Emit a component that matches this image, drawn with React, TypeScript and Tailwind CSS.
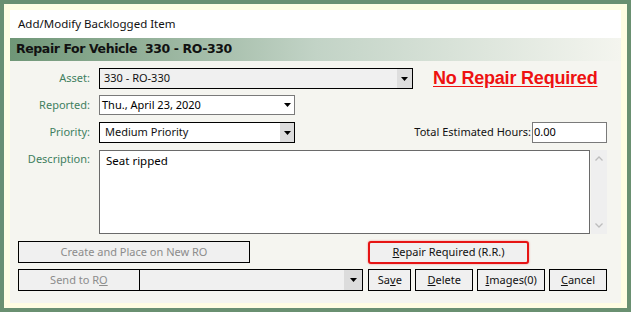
import React from 'react';

const Arrow = ({ className = '' }: { className?: string }) => (
  <svg width="7" height="4" viewBox="0 0 7 4" className={className}>
    <path d="M0 0h7L3.5 4z" fill="#000" />
  </svg>
);

const Label: React.FC<{ children: React.ReactNode; className?: string }> = ({ children, className = '' }) => (
  <div className={`w-[81px] shrink-0 text-right text-[11px] text-[#3f7f5f] pr-[1px] ${className}`}>{children}</div>
);

const Btn: React.FC<{ children: React.ReactNode; className?: string }> = ({ children, className = '' }) => (
  <div className={`h-[22px] flex items-center justify-center bg-[#f0f0f0] border border-black text-[11px] ${className}`}>{children}</div>
);

export default function App() {
  return (
    <div className="w-[631px] h-[312px] bg-[#6a9071] p-[4px] font-['Noto_Sans',sans-serif]">
      <div className="w-[623px] h-[304px] bg-[#fffde2] pt-[6px] pl-[6px] pr-[6px] pb-[5px]">
        <div className="w-[611px] h-[293px] flex flex-col">
          {/* Title */}
          <div className="h-[28px] bg-white flex items-center pl-[8px] text-[11.5px] text-[#111]">
            Add/Modify Backlogged Item
          </div>
          {/* Header */}
          <div className="h-[23px] bg-gradient-to-r from-[#6f9677] via-[#c2d3c6] to-[#f4f5ef] flex items-center pl-[6px] text-[12.5px] font-bold text-[#111] font-['DejaVu_Sans',sans-serif] tracking-[-0.4px] whitespace-pre">
            Repair For Vehicle  330 - RO-330
          </div>
          {/* Body */}
          <div className="flex-1 bg-[#f5f5f0] flex flex-col pr-[14px]">
            {/* Asset */}
            <div className="flex items-center mt-[7px] h-[21px]">
              <Label>Asset:</Label>
              <div className="ml-[8px] w-[314px] h-[21px] border border-black bg-[#f0f0f0] flex items-center">
                <span className="flex-1 pl-[4px] text-[11px] text-[#111]">330 - RO-330</span>
                <div className="w-[15px] h-full bg-[#dedede] flex items-center justify-center">
                  <Arrow />
                </div>
              </div>
              <div className="ml-[20px] whitespace-nowrap text-[18px] font-bold text-[#ee1111] underline underline-offset-2 font-['Liberation_Sans',sans-serif] tracking-[-0.2px]">
                No Repair Required
              </div>
            </div>
            {/* Reported */}
            <div className="flex items-center mt-[6px] h-[20px]">
              <Label>Reported:</Label>
              <div className="ml-[8px] w-[196px] h-[20px] border border-[#7a7a7a] bg-white flex items-center">
                <span className="flex-1 pl-[2px] text-[11px] text-black">Thu., April 23, 2020</span>
                <Arrow className="mr-[3px]" />
              </div>
            </div>
            {/* Priority */}
            <div className="flex items-center mt-[7px] h-[21px]">
              <Label>Priority:</Label>
              <div className="ml-[8px] w-[196px] h-[21px] border border-black bg-white flex items-center">
                <span className="flex-1 pl-[5px] text-[11px] text-[#111]">Medium Priority</span>
                <div className="w-[14px] h-full bg-[#dcdcdc] flex items-center justify-center">
                  <Arrow />
                </div>
              </div>
              <div className="flex-1" />
              <div className="text-[11px] text-[#111] mr-[1px]">Total Estimated Hours:</div>
              <div className="w-[75px] h-[21px] border border-[#7a7a7a] bg-white flex items-center pl-[1px] text-[11px] text-black">
                0.00
              </div>
            </div>
            {/* Description */}
            <div className="flex mt-[7px] h-[84px]">
              <Label className="pt-[1px]">Description:</Label>
              <div className="ml-[8px] w-[491px] h-full border border-[#6a6a6a] bg-white pl-[6px] pt-[1px] text-[11.5px] text-black">
                Seat ripped
              </div>
              <div className="ml-[1px] w-[16px] h-full bg-[#efefef] flex flex-col items-center justify-between py-[6px]">
                <svg width="8" height="5" viewBox="0 0 8 5"><path d="M0.5 4.5L4 1l3.5 3.5" stroke="#bdbdbd" strokeWidth="1.3" fill="none" /></svg>
                <svg width="8" height="5" viewBox="0 0 8 5"><path d="M0.5 0.5L4 4l3.5-3.5" stroke="#bdbdbd" strokeWidth="1.3" fill="none" /></svg>
              </div>
            </div>
            {/* Create / Repair required */}
            <div className="flex items-center mt-[6px] h-[24px] pl-[8px]">
              <Btn className="w-[232px] text-[#8c8c8c]">Create and Place on New RO</Btn>
              <div className="ml-[118px] w-[161px] h-[23px] rounded-[3px] border-2 border-[#e61414] bg-[#f0f0f0] flex items-center justify-center text-[11px] text-[#111] shadow-[0_0_2px_rgba(230,20,20,0.5)]">
                <span><span className="underline">R</span>epair Required (R.R.)</span>
              </div>
            </div>
            {/* Bottom row */}
            <div className="flex items-center mt-[5px] h-[22px] pl-[8px]">
              <Btn className="w-[122px] text-[#8c8c8c]">
                <span>Send to R<span className="underline">O</span></span>
              </Btn>
              <div className="w-[225px] h-[22px] -ml-[1px] border border-black bg-[#f0f0f0] flex items-center justify-end">
                <div className="w-[18px] h-full bg-[#dcdcdc] flex items-center justify-center">
                  <Arrow />
                </div>
              </div>
              <Btn className="ml-[5px] w-[43px] text-[#111]">
                <span>Sa<span className="underline">v</span>e</span>
              </Btn>
              <Btn className="ml-[4px] w-[58px] text-[#111]">
                <span><span className="underline">D</span>elete</span>
              </Btn>
              <Btn className="ml-[4px] w-[68px] text-[#111]">
                <span><span className="underline">I</span>mages(0)</span>
              </Btn>
              <Btn className="ml-[4px] w-[58px] text-[#111]">
                <span><span className="underline">C</span>ancel</span>
              </Btn>
            </div>
          </div>
        </div>
      </div>
    </div>
  );
}
